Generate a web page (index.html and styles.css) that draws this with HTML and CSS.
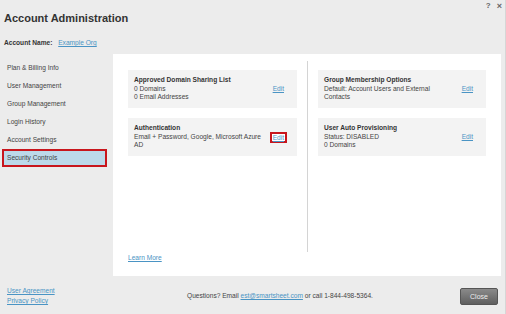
FILE: index.html
```html
<!DOCTYPE html>
<html>
<head>
<meta charset="utf-8">
<link rel="stylesheet" href="styles.css">
</head>
<body>
<div class="dialog">
  <div class="top">
    <h1 class="title">Account Administration</h1>
    <div class="tools"><span class="help">?</span><span class="close-x">×</span></div>
  </div>
  <div class="account-name"><b>Account Name:</b> <a href="#">Example Org</a></div>
  <div class="main">
    <ul class="nav">
      <li class="nav-item">Plan &amp; Billing Info</li>
      <li class="nav-item">User Management</li>
      <li class="nav-item">Group Management</li>
      <li class="nav-item">Login History</li>
      <li class="nav-item">Account Settings</li>
      <li class="nav-item active">Security Controls</li>
    </ul>
    <div class="panel">
      <div class="columns">
        <div class="col">
          <div class="card">
            <div class="card-body">
              <div class="card-title">Approved Domain Sharing List</div>
              <div>0 Domains</div>
              <div>0 Email Addresses</div>
            </div>
            <a class="edit" href="#">Edit</a>
          </div>
          <div class="card">
            <div class="card-body">
              <div class="card-title">Authentication</div>
              <div>Email + Password, Google, Microsoft Azure AD</div>
            </div>
            <a class="edit marked" href="#">Edit</a>
          </div>
        </div>
        <div class="divider"></div>
        <div class="col">
          <div class="card">
            <div class="card-body">
              <div class="card-title">Group Membership Options</div>
              <div>Default: Account Users and External Contacts</div>
            </div>
            <a class="edit" href="#">Edit</a>
          </div>
          <div class="card">
            <div class="card-body">
              <div class="card-title">User Auto Provisioning</div>
              <div>Status: DISABLED</div>
              <div>0 Domains</div>
            </div>
            <a class="edit" href="#">Edit</a>
          </div>
        </div>
      </div>
      <a class="learn" href="#">Learn More</a>
    </div>
  </div>
  <div class="footer">
    <div class="legal">
      <a href="#">User Agreement</a>
      <a href="#">Privacy Policy</a>
    </div>
    <div class="questions">Questions? Email <a href="#">est@smartsheet.com</a> or call 1-844-498-5364.</div>
    <button class="btn-close">Close</button>
  </div>
</div>
</body>
</html>
```
FILE: styles.css
```css
* { box-sizing: border-box; }
html, body { margin: 0; padding: 0; }
body {
  width: 506px;
  height: 314px;
  background: #ececec;
  font-family: "Liberation Sans", Arial, sans-serif;
  font-size: 6.6px;
  color: #444;
  overflow: hidden;
}
a { color: #4a94c4; text-decoration: underline; }
.dialog {
  width: 506px;
  height: 314px;
  border-right: 1px solid #d6d6d6;
  display: flex;
  flex-direction: column;
}
.top {
  display: flex;
  justify-content: space-between;
  align-items: flex-start;
  height: 35px;
}
.title {
  margin: 11px 0 0 4px;
  font-size: 11px;
  line-height: 14px;
  font-weight: bold;
  color: #333;
}
.tools {
  display: flex;
  gap: 6px;
  margin: 1px 3px 0 0;
  font-size: 8px;
  line-height: 10px;
  color: #666;
  font-weight: bold;
}
.close-x { font-size: 9px; }
.account-name {
  margin-left: 4px;
  height: 19px;
  line-height: 16px;
  color: #333;
}
.account-name b { margin-right: 4px; }
.main {
  display: flex;
  height: 222px;
}
.nav {
  list-style: none;
  margin: 0;
  padding: 5px 6px 0 2px;
  width: 113px;
}
.nav-item {
  height: 18px;
  line-height: 14px;
  padding: 0 3px;
  border: 2px solid transparent;
  color: #444;
}
.nav-item.active {
  background: #bcd9ea;
  border-color: #c8161d;
}
.panel {
  width: 388px;
  background: #fff;
  padding: 7px 15px 0;
  display: flex;
  flex-direction: column;
}
.columns {
  display: flex;
  height: 191px;
}
.col {
  display: flex;
  flex-direction: column;
  gap: 10px;
  padding-top: 9px;
}
.col:first-child { width: 169px; }
.col:last-child { width: 168px; }
.divider {
  width: 1px;
  background: #d4d4d4;
  margin: 0 10px;
}
.card {
  background: #f3f3f3;
  display: flex;
  align-items: center;
  padding: 5px 6px 5px 6px;
  min-height: 38px;
  line-height: 8.5px;
}
.card-body { flex: 1; padding-right: 8px; }
.card-title { font-weight: bold; color: #333; }
.edit { margin-right: 7px; }
.edit.marked {
  display: block;
  border: 2px solid #c8161d;
  padding: 0 1px;
  margin-right: 4px;
  margin-left: -5px;
  line-height: 7px;
  height: 11px;
  background: #fff;
}
.learn {
  margin-top: 2px;
  line-height: 8px;
  align-self: flex-start;
}
.footer {
  flex: 1;
  display: flex;
  align-items: center;
  padding: 0 7px 0 7px;
}
.legal {
  display: flex;
  flex-direction: column;
  line-height: 10px;
  width: 180px;
  margin-top: 2px;
}
.questions {
  flex: 1;
  color: #444;
}
.btn-close {
  width: 38px;
  height: 17px;
  margin-top: 2px;
  border: 1px solid #555;
  border-radius: 2px;
  background: linear-gradient(#8a8a8a, #5f5f5f);
  color: #eee;
  font-family: "Liberation Sans", Arial, sans-serif;
  font-size: 7px;
  padding: 0;
}
```
